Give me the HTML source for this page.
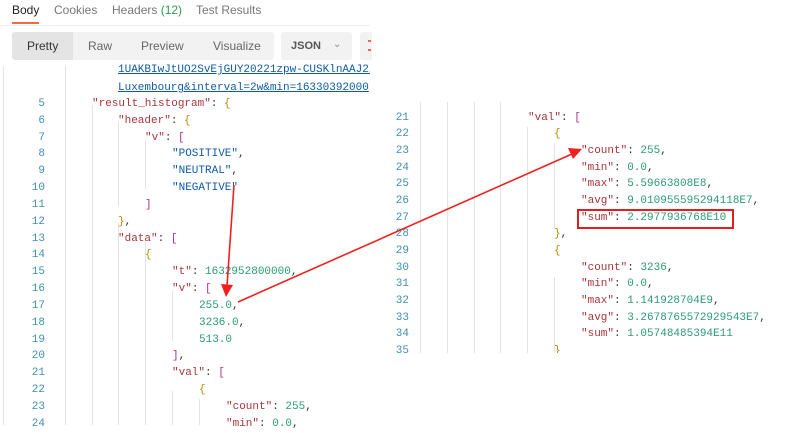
<!DOCTYPE html>
<html><head><meta charset="utf-8"><style>
*{margin:0;padding:0;box-sizing:border-box}
body{width:787px;height:425px;background:#fff;position:relative;overflow:hidden;font-family:"Liberation Sans",sans-serif}
.a{position:absolute}
.ln{position:absolute;font:11px/16.8px "Liberation Mono",monospace;white-space:pre;height:16.8px}
.n{color:#3f8fb0;text-align:right;width:22px}
.k{color:#a8353a}.s{color:#0f5aa8}.v{color:#2b9a78}.p{color:#333}.b{color:#a3338a}.c{color:#b58a00}
.g{position:absolute;width:1px;background:#e3e3e3}
</style></head><body>
<div class="a" style="left:12px;top:3px;font-size:12px;color:#222">Body</div>
<div class="a" style="left:54px;top:3px;font-size:12px;color:#777">Cookies</div>
<div class="a" style="left:112px;top:3px;font-size:12px;color:#777">Headers <span style="color:#2d9a55">(12)</span></div>
<div class="a" style="left:196px;top:3px;font-size:12px;color:#777">Test Results</div>
<div class="a" style="left:12px;top:22px;width:27px;height:2px;background:#f26b3a"></div>
<div class="a" style="left:0;top:25px;width:370px;height:1px;background:#eee"></div>
<div class="a" style="left:12px;top:32px;width:262px;height:28px;background:#f2f2f2;border-radius:3px"></div>
<div class="a" style="left:12px;top:32px;width:61px;height:28px;background:#e4e4e4;border-radius:3px 0 0 3px"></div>
<div class="a" style="left:27px;top:39px;font-size:12px;color:#333">Pretty</div>
<div class="a" style="left:88px;top:39px;font-size:12px;color:#666">Raw</div>
<div class="a" style="left:141px;top:39px;font-size:12px;color:#666">Preview</div>
<div class="a" style="left:213px;top:39px;font-size:12px;color:#666">Visualize</div>
<div class="a" style="left:281px;top:32px;width:71px;height:28px;background:#f2f2f2;border-radius:3px"></div>
<div class="a" style="left:291px;top:40px;font-size:11px;font-weight:bold;color:#555">JSON</div>
<div class="a" style="left:333px;top:39px;font-size:10px;color:#888">&#8964;</div>
<div class="a" style="left:360px;top:32px;width:12px;height:28px;background:#f2f2f2;border-radius:3px 0 0 3px"></div>
<div class="a" style="left:368px;top:40px;width:3px;height:11px;border-top:2px solid #f26b3a;border-bottom:2px solid #f26b3a"></div>
<div class="a" style="left:3px;top:66px;width:1px;height:359px;background:#e6e6e6"></div>
<div class="g" style="left:65px;top:66px;height:359px"></div>
<div class="a" style="left:0;top:60px;width:370px;height:40px;overflow:hidden">
<div class="ln s" style="left:118px;top:2px;text-decoration:underline">1UAKBIwJtUO2SvEjGUY20221zpw-CUSKlnAAJ2/</div>
<div class="ln s" style="left:118px;top:20px;text-decoration:underline">Luxembourg&amp;interval=2w&amp;min=16330392000</div>
</div>
<div class="g" style="left:92px;top:105px;height:320px"></div>
<div class="g" style="left:118px;top:122px;height:84px"></div>
<div class="g" style="left:118px;top:223px;height:202px"></div>
<div class="g" style="left:145px;top:139px;height:50px"></div>
<div class="g" style="left:145px;top:240px;height:185px"></div>
<div class="g" style="left:172px;top:291px;height:50px"></div>
<div class="g" style="left:172px;top:391px;height:34px"></div>
<div class="g" style="left:199px;top:399px;height:26px"></div>
<div class="ln n" style="left:23px;top:96px">5</div><div class="ln" style="left:92px;top:96px"><span class="k">"result_histogram"</span><span class="p">: </span><span class="c">{</span></div>
<div class="ln n" style="left:23px;top:113px">6</div><div class="ln" style="left:118px;top:113px"><span class="k">"header"</span><span class="p">: </span><span class="c">{</span></div>
<div class="ln n" style="left:23px;top:130px">7</div><div class="ln" style="left:145px;top:130px"><span class="k">"v"</span><span class="p">: </span><span class="b">[</span></div>
<div class="ln n" style="left:23px;top:146px">8</div><div class="ln" style="left:172px;top:146px"><span class="s">"POSITIVE"</span><span class="p">,</span></div>
<div class="ln n" style="left:23px;top:163px">9</div><div class="ln" style="left:172px;top:163px"><span class="s">"NEUTRAL"</span><span class="p">,</span></div>
<div class="ln n" style="left:23px;top:180px">10</div><div class="ln" style="left:172px;top:180px"><span class="s">"NEGATIVE"</span></div>
<div class="ln n" style="left:23px;top:197px">11</div><div class="ln" style="left:145px;top:197px"><span class="b">]</span></div>
<div class="ln n" style="left:23px;top:214px">12</div><div class="ln" style="left:118px;top:214px"><span class="c">}</span><span class="p">,</span></div>
<div class="ln n" style="left:23px;top:231px">13</div><div class="ln" style="left:118px;top:231px"><span class="k">"data"</span><span class="p">: </span><span class="b">[</span></div>
<div class="ln n" style="left:23px;top:247px">14</div><div class="ln" style="left:145px;top:247px"><span class="c">{</span></div>
<div class="ln n" style="left:23px;top:264px">15</div><div class="ln" style="left:172px;top:264px"><span class="k">"t"</span><span class="p">: </span><span class="v">1632952800000</span><span class="p">,</span></div>
<div class="ln n" style="left:23px;top:281px">16</div><div class="ln" style="left:172px;top:281px"><span class="k">"v"</span><span class="p">: </span><span class="b">[</span></div>
<div class="ln n" style="left:23px;top:298px">17</div><div class="ln" style="left:199px;top:298px"><span class="v">255.0</span><span class="p">,</span></div>
<div class="ln n" style="left:23px;top:315px">18</div><div class="ln" style="left:199px;top:315px"><span class="v">3236.0</span><span class="p">,</span></div>
<div class="ln n" style="left:23px;top:332px">19</div><div class="ln" style="left:199px;top:332px"><span class="v">513.0</span></div>
<div class="ln n" style="left:23px;top:348px">20</div><div class="ln" style="left:172px;top:348px"><span class="b">]</span><span class="p">,</span></div>
<div class="ln n" style="left:23px;top:365px">21</div><div class="ln" style="left:172px;top:365px"><span class="k">"val"</span><span class="p">: </span><span class="b">[</span></div>
<div class="ln n" style="left:23px;top:382px">22</div><div class="ln" style="left:199px;top:382px"><span class="c">{</span></div>
<div class="ln n" style="left:23px;top:399px">23</div><div class="ln" style="left:226px;top:399px"><span class="k">"count"</span><span class="p">: </span><span class="v">255</span><span class="p">,</span></div>
<div class="ln n" style="left:23px;top:416px">24</div><div class="ln" style="left:226px;top:416px"><span class="k">"min"</span><span class="p">: </span><span class="v">0.0</span><span class="p">,</span></div>

<div class="a" style="left:373px;top:66px;width:414px;height:359px;background:#fff;overflow:hidden">
 <div class="a" style="left:0;top:36px;width:414px;height:251px;overflow:hidden">
  <div class="g" style="left:47px;top:0;height:253px"></div>
  <div class="g" style="left:74px;top:0;height:253px"></div>
  <div class="g" style="left:101px;top:0;height:253px"></div>
  <div class="g" style="left:127px;top:0;height:253px"></div>
  <div class="g" style="left:154px;top:25px;height:226px"></div>
  <div class="g" style="left:181px;top:42px;height:84px"></div>
  <div class="g" style="left:181px;top:175px;height:84px"></div>
  <div class="ln k" style="left:154px;top:-13px">},</div>
  <div class="ln n" style="left:14px;top:8px">21</div><div class="ln" style="left:155px;top:8px"><span class="k">"val"</span><span class="p">: </span><span class="b">[</span></div>
  <div class="ln n" style="left:14px;top:24px">22</div><div class="ln" style="left:181px;top:24px"><span class="c">{</span></div>
  <div class="ln n" style="left:14px;top:41px">23</div><div class="ln" style="left:208px;top:41px"><span class="k">"count"</span><span class="p">: </span><span class="v">255</span><span class="p">,</span></div>
  <div class="ln n" style="left:14px;top:58px">24</div><div class="ln" style="left:208px;top:58px"><span class="k">"min"</span><span class="p">: </span><span class="v">0.0</span><span class="p">,</span></div>
  <div class="ln n" style="left:14px;top:74px">25</div><div class="ln" style="left:208px;top:74px"><span class="k">"max"</span><span class="p">: </span><span class="v">5.59663808E8</span><span class="p">,</span></div>
  <div class="ln n" style="left:14px;top:91px">26</div><div class="ln" style="left:208px;top:91px"><span class="k">"avg"</span><span class="p">: </span><span class="v">9.010955595294118E7</span><span class="p">,</span></div>
  <div class="ln n" style="left:14px;top:108px">27</div><div class="ln" style="left:208px;top:108px"><span class="k">"sum"</span><span class="p">: </span><span class="v">2.2977936768E10</span></div>
  <div class="ln n" style="left:14px;top:124px">28</div><div class="ln" style="left:181px;top:124px"><span class="c">}</span><span class="p">,</span></div>
  <div class="ln n" style="left:14px;top:141px">29</div><div class="ln" style="left:181px;top:141px"><span class="c">{</span></div>
  <div class="ln n" style="left:14px;top:158px">30</div><div class="ln" style="left:208px;top:158px"><span class="k">"count"</span><span class="p">: </span><span class="v">3236</span><span class="p">,</span></div>
  <div class="ln n" style="left:14px;top:174px">31</div><div class="ln" style="left:208px;top:174px"><span class="k">"min"</span><span class="p">: </span><span class="v">0.0</span><span class="p">,</span></div>
  <div class="ln n" style="left:14px;top:191px">32</div><div class="ln" style="left:208px;top:191px"><span class="k">"max"</span><span class="p">: </span><span class="v">1.141928704E9</span><span class="p">,</span></div>
  <div class="ln n" style="left:14px;top:208px">33</div><div class="ln" style="left:208px;top:208px"><span class="k">"avg"</span><span class="p">: </span><span class="v">3.2678765572929543E7</span><span class="p">,</span></div>
  <div class="ln n" style="left:14px;top:224px">34</div><div class="ln" style="left:208px;top:224px"><span class="k">"sum"</span><span class="p">: </span><span class="v">1.05748485394E11</span></div>
  <div class="ln n" style="left:14px;top:241px">35</div><div class="ln" style="left:181px;top:241px"><span class="c">}</span></div>
 </div>
</div>
<div class="a" style="left:577px;top:209px;width:157px;height:20px;border:2px solid #e02020"></div>
<svg class="a" style="left:0;top:0" width="787" height="425">
 <line x1="234" y1="185" x2="227" y2="286" stroke="#f02020" stroke-width="1.6"/>
 <polygon points="221,284 233,285 226,297" fill="#f02020"/>
 <line x1="238" y1="302" x2="572" y2="154" stroke="#f02020" stroke-width="1.6"/>
 <polygon points="582,149 568,148 573,159" fill="#f02020"/>
</svg>
</body></html>
